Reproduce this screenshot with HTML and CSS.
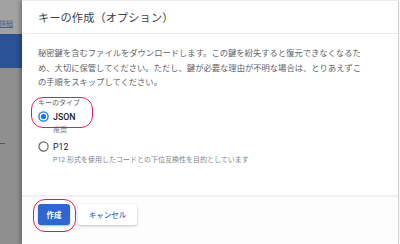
FILE: index.html
```html
<!DOCTYPE html>
<html lang="ja">
<head>
<meta charset="utf-8">
<link rel="stylesheet" href="styles.css">
</head>
<body>
<div class="page">
  <aside class="side">
    <div class="side-top"><span class="side-link">詳細</span></div>
    <div class="side-active"></div>
    <div class="side-rest"><span class="side-mark"></span></div>
  </aside>
  <section class="dialog">
    <header class="dlg-head"><h1 class="dlg-title">キーの作成（オプション）</h1></header>
    <div class="dlg-body">
      <p class="desc">秘密鍵を含むファイルをダウンロードします。この鍵を紛失すると復元できなくなるた<br>め、大切に保管してください。ただし、鍵が必要な理由が不明な場合は、とりあえずこ<br>の手順をスキップしてください。</p>
      <div class="field-label">キーのタイプ</div>
      <label class="radio-row">
        <svg class="radio" width="11" height="11" viewBox="0 0 11 11"><circle cx="5.5" cy="5.5" r="4.6" fill="none" stroke="#1a73e8" stroke-width="1.3"/><circle cx="5.5" cy="5.5" r="2.6" fill="#1a73e8"/></svg>
        <span class="radio-text strong">JSON</span>
      </label>
      <div class="hint">推奨</div>
      <label class="radio-row second">
        <svg class="radio" width="11" height="11" viewBox="0 0 11 11"><circle cx="5.5" cy="5.5" r="4.6" fill="none" stroke="#5f6368" stroke-width="1.2"/></svg>
        <span class="radio-text">P12</span>
      </label>
      <div class="hint">P12 形式を使用したコードとの下位互換性を目的としています</div>
    </div>
    <footer class="dlg-foot">
      <button class="btn primary">作成</button>
      <button class="btn flat">キャンセル</button>
    </footer>
  </section>
  <div class="mark mark-type"></div>
  <div class="mark mark-btn"></div>
</div>
</body>
</html>
```
FILE: styles.css
```css
* { box-sizing: border-box; }
html, body { margin: 0; padding: 0; }
body {
  width: 400px;
  height: 244px;
  overflow: hidden;
  background: #ffffff;
  font-family: Roboto, "Noto Sans CJK JP", sans-serif;
}
.page {
  position: relative;
  display: flex;
  width: 400px;
  height: 244px;
}
.side {
  width: 22px;
  flex: none;
  display: flex;
  flex-direction: column;
  overflow: hidden;
  background: #8e8e8e;
}
.side-top {
  height: 34px;
  background: #a2a2a2;
  padding-top: 11px;
  white-space: nowrap;
}
.side-link {
  font-size: 7px;
  line-height: 10px;
  color: #44629a;
  text-decoration: underline;
  margin-left: -1px;
}
.side-active {
  height: 34px;
  background: #2c5296;
}
.side-rest {
  flex: 1;
  background: #8f8f8f;
  padding-top: 75px;
}
.side-mark {
  display: block;
  width: 5px;
  height: 1px;
  background: #555;
}
.dialog {
  width: 377px;
  flex: none;
  display: flex;
  flex-direction: column;
  background: #ffffff;
  border-top: 1px solid #ececec;
  border-right: 1px solid #d2d2d2;
  box-shadow: -2px 0 4px rgba(0,0,0,0.28);
}
.dlg-head {
  height: 33px;
  border-bottom: 1px solid #ececec;
  padding-left: 16px;
  display: flex;
  align-items: center;
}
.dlg-title {
  margin: 0;
  font-size: 11.2px;
  font-weight: 400;
  color: #3c4043;
  letter-spacing: 0.1px;
}
.dlg-body {
  padding: 12px 0 0 16px;
  display: flex;
  flex-direction: column;
}
.desc {
  margin: 0;
  font-size: 8.3px;
  line-height: 14.5px;
  color: #5f6368;
  white-space: nowrap;
}
.field-label {
  margin-top: 8px;
  font-size: 7px;
  line-height: 10px;
  color: #5f6368;
}
.radio-row {
  display: flex;
  align-items: center;
  gap: 4px;
  height: 14px;
  margin-top: 2px;
}
.radio-row.second { margin-top: 5px; }
.radio { display: block; flex: none; }
.radio-text {
  font-size: 8.8px;
  color: #202124;
}
.radio-text.strong { font-weight: 500; }
.hint {
  margin-top: 1px;
  padding-left: 15px;
  font-size: 7px;
  line-height: 10px;
  color: #80868b;
}
.dlg-foot {
  margin-top: auto;
  height: 49px;
  border-top: 2px solid #f1f1f1;
  background: #fdfdfd;
  padding: 7px 0 0 16px;
  display: flex;
  align-items: flex-start;
  gap: 8px;
}
.btn {
  height: 21px;
  border: none;
  border-radius: 3px;
  font-family: Roboto, "Noto Sans CJK JP", sans-serif;
  font-size: 7.5px;
  font-weight: 700;
  padding: 0;
  cursor: pointer;
}
.btn.primary {
  width: 32px;
  background: #2f66d1;
  color: #ffffff;
  box-shadow: 0 1px 2px rgba(0,0,0,0.3);
}
.btn.flat {
  width: 59px;
  background: #ffffff;
  color: #3b6fd8;
  font-weight: 500;
  box-shadow: 0 1px 3px rgba(0,0,0,0.25);
}
.mark {
  position: absolute;
  border: 1.5px solid #e5195a;
}
.mark-type {
  left: 31px;
  top: 97px;
  width: 62px;
  height: 31px;
  border-radius: 12px;
}
.mark-btn {
  left: 33px;
  top: 199px;
  width: 43px;
  height: 33px;
  border-radius: 12px;
}
```
